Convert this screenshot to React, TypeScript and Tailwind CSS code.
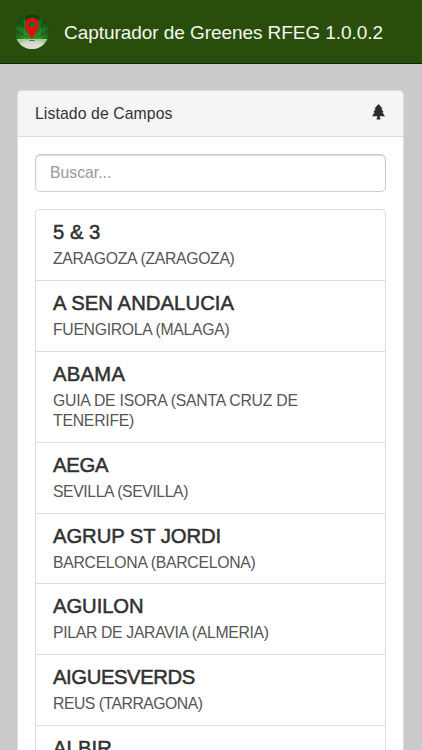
type Campo = { name: string; place?: string; height: string; nameTracking: string; placeTracking: string };

const campos: Campo[] = [
  { name: "5 & 3", place: "ZARAGOZA (ZARAGOZA)", height: "h-[71px]", nameTracking: "tracking-normal", placeTracking: "tracking-[-0.3px]" },
  { name: "A SEN ANDALUCIA", place: "FUENGIROLA (MALAGA)", height: "h-[71px]", nameTracking: "tracking-[0.070px]", placeTracking: "tracking-[-0.3px]" },
  { name: "ABAMA", place: "GUIA DE ISORA (SANTA CRUZ DE TENERIFE)", height: "h-[91px]", nameTracking: "tracking-[0.250px]", placeTracking: "tracking-[-0.220px]" },
  { name: "AEGA", place: "SEVILLA (SEVILLA)", height: "h-[71px]", nameTracking: "tracking-[-0.250px]", placeTracking: "tracking-[-0.4px]" },
  { name: "AGRUP ST JORDI", place: "BARCELONA (BARCELONA)", height: "h-[70px]", nameTracking: "tracking-[-0.080px]", placeTracking: "tracking-[-0.280px]" },
  { name: "AGUILON", place: "PILAR DE JARAVIA (ALMERIA)", height: "h-[71px]", nameTracking: "tracking-[-0.080px]", placeTracking: "tracking-[-0.310px]" },
  { name: "AIGUESVERDS", place: "REUS (TARRAGONA)", height: "h-[71px]", nameTracking: "tracking-[-0.4px]", placeTracking: "tracking-[-0.480px]" },
  { name: "ALBIR", height: "h-[71px]", nameTracking: "tracking-[0.1px]", placeTracking: "tracking-normal" },
];

function Logo() {
  return (
    <svg className="h-[34px] w-[34px] shrink-0" viewBox="0 0 34 34">
      <defs>
        <radialGradient id="turf" cx="0.5" cy="0.65" r="0.65">
          <stop offset="0" stopColor="#4f9c3c" />
          <stop offset="0.5" stopColor="#2a7d20" />
          <stop offset="1" stopColor="#12500f" />
        </radialGradient>
        <linearGradient id="ball" x1="0" y1="0" x2="0" y2="1">
          <stop offset="0" stopColor="#c9d2c5" />
          <stop offset="1" stopColor="#f4f6f3" />
        </linearGradient>
        <clipPath id="disc"><circle cx="17" cy="17" r="17" /></clipPath>
      </defs>
      <g clipPath="url(#disc)">
        <rect width="34" height="34" fill="url(#turf)" />
        <path d="M17 24 0 14v4ZM17 24 2 7l4-3ZM17 24 11 0h4ZM17 24 20 0h4ZM17 24 29 4l3 4ZM17 24 34 14v4Z" fill="#0a4a0b" opacity=".4" />
        <path d="M9.500 0h15.500v4.500H9.500Z" fill="#0b3510" opacity=".6" />
        <path d="M9.500 1v23M25 1v23M0 14h34" stroke="#9bc68e" strokeWidth=".5" strokeDasharray="2 1.5" opacity=".5" />
        <rect y="24" width="34" height="10" fill="#a3cf9b" />
        <ellipse cx="17" cy="34" rx="16" ry="8.500" fill="url(#ball)" />
        <ellipse cx="17" cy="25.500" rx="3.200" ry=".6" fill="#4b6548" />
      </g>
      <path fillRule="evenodd" d="M17 2.500a6.700 6.700 0 0 0-6.700 6.700c0 5 4.400 9.300 6.700 15 2.300-5.700 6.700-10 6.700-15A6.700 6.700 0 0 0 17 2.500Zm0 4a3 3 0 1 1 0 6 3 3 0 0 1 0-6Z" fill="#e20d10" />
    </svg>
  );
}

function Conifer() {
  return (
    <svg className="mb-[3px] h-[16px] w-[13px]" viewBox="0 0 13 16" fill="#2c2c2c">
      <path d="M6.500 0 10.700 4.700H9.200L11.700 8.300H10.300L13 12.200H7.800V13.800H8.300V15.500H4.700V13.800H5.200V12.200H0L2.700 8.300H1.300L3.800 4.700H2.300Z" />
    </svg>
  );
}

export default function App() {
  return (
    <div className="h-[750px] overflow-hidden bg-[#cacaca] font-['Liberation_Sans',Arial,sans-serif] text-[#333]">
      <header className="flex h-[64px] items-center border-b border-[#08260a] bg-[#294e0b] pl-[15px]">
        <Logo />
        <h1 className="ml-[15px] pt-[2px] text-[19px] leading-[28px] tracking-[-0.060px] whitespace-nowrap text-[#f3f8ef]">Capturador de Greenes RFEG 1.0.0.2</h1>
      </header>
      <main className="mx-[17px] mt-[26px] mr-[18px] rounded-[5px] border border-[#dedede] bg-white">
        <div className="flex h-[46px] items-center justify-between rounded-t-[4px] border-b border-[#dddddd] bg-[#f5f5f5] pr-[18px] pl-[17px]">
          <h2 className="text-[15.750px] tracking-[0.110px]">Listado de Campos</h2>
          <Conifer />
        </div>
        <div className="px-[17px] pt-[17px]">
          <input
            placeholder="Buscar..."
            className="block h-[38px] w-full rounded-[5px] border border-[#cccccc] bg-white px-[14px] text-[15.750px] shadow-[inset_0_1px_1px_rgba(0,0,0,0.15)] placeholder:text-[#999]"
          />
          <ul className="mt-[17px] rounded-t-[5px] border border-b-0 border-[#dddddd]">
            {campos.map((c) => (
              <li key={c.name} className={`${c.height} border-b border-[#dddddd] px-[17px] pt-[11px]`}>
                <h3 className={`${c.nameTracking} text-[20.250px] leading-[22px] whitespace-nowrap [-webkit-text-stroke:0.5px_#2d2d2d]`}>{c.name}</h3>
                {c.place && (
                  <p className={`${c.placeTracking} mt-[6px] w-[270px] text-[15.750px] leading-[20.250px] text-[#555]`}>{c.place}</p>
                )}
              </li>
            ))}
          </ul>
        </div>
      </main>
    </div>
  );
}
